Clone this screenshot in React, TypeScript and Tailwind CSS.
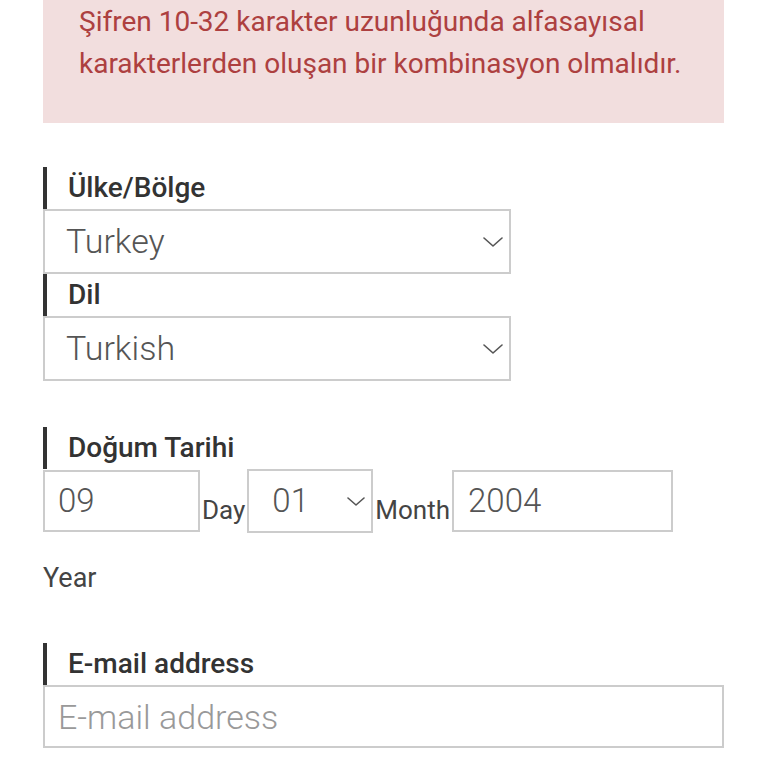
import React from 'react';

const Chevron: React.FC<{ w?: number; h?: number }> = ({ w = 20, h = 10 }) => (
  <svg width={w} height={h} viewBox={`0 0 ${w} ${h}`} fill="none" className="shrink-0">
    <polyline
      points={`1,1 ${w / 2},${h - 1} ${w - 1},1`}
      stroke="#555"
      strokeWidth="1.6"
      strokeLinecap="round"
      strokeLinejoin="round"
    />
  </svg>
);

const FieldLabel: React.FC<{ children: React.ReactNode }> = ({ children }) => (
  <div className="h-[42px] border-l-4 border-[#333] pl-[21px] flex items-center text-[28px] font-medium text-[#333]">
    {children}
  </div>
);

const SelectBox: React.FC<{ value: string }> = ({ value }) => (
  <div className="w-[468px] h-[65px] border-2 border-[#ccc] bg-white flex items-center justify-between pl-[21px] pr-[6px] text-[34px] font-light text-[#555]">
    <span>{value}</span>
    <Chevron />
  </div>
);

export default function App() {
  return (
    <div className="w-[768px] h-[768px] overflow-hidden bg-white pl-[43px] font-[Roboto,sans-serif]">
      <div className="w-[681px] bg-[#f2dede] text-[#ad4040] text-[28px] leading-[42px] pt-[1px] pb-[38px] pl-[36px] whitespace-nowrap">
        Şifren 10-32 karakter uzunluğunda alfasayısal
        <br />
        karakterlerden oluşan bir kombinasyon olmalıdır.
      </div>

      <div className="mt-[44px]">
        <FieldLabel>Ülke/Bölge</FieldLabel>
        <SelectBox value="Turkey" />
        <FieldLabel>Dil</FieldLabel>
        <SelectBox value="Turkish" />
      </div>

      <div className="mt-[46px]">
        <FieldLabel>Doğum Tarihi</FieldLabel>
        <div className="flex items-end gap-[2px] text-[#444]">
          <div className="w-[157px] h-[62px] border-2 border-[#ccc] flex items-center pl-[13px] text-[33px] font-light text-[#555] mb-[1px]">
            09
          </div>
          <span className="text-[26px] leading-[30px] mb-[8px]">Day</span>
          <div className="w-[126px] h-[64px] border-2 border-[#ccc] flex items-center justify-between pl-[23px] pr-[6px] text-[33px] font-light text-[#555]">
            <span>01</span>
            <Chevron w={18} h={9} />
          </div>
          <span className="text-[26px] leading-[30px] mb-[8px]">Month</span>
          <div className="w-[221px] h-[62px] border-2 border-[#ccc] flex items-center pl-[14px] text-[33px] font-light text-[#555] mb-[1px]">
            2004
          </div>
        </div>
        <div className="mt-[30px] text-[27px] leading-[30px] text-[#444]">Year</div>
      </div>

      <div className="mt-[50px]">
        <FieldLabel>E-mail address</FieldLabel>
        <input
          type="email"
          placeholder="E-mail address"
          className="w-[681px] h-[63px] border-2 border-[#ccc] pl-[13px] text-[34px] font-light text-[#555] placeholder:text-[#999] outline-none"
        />
      </div>
    </div>
  );
}
